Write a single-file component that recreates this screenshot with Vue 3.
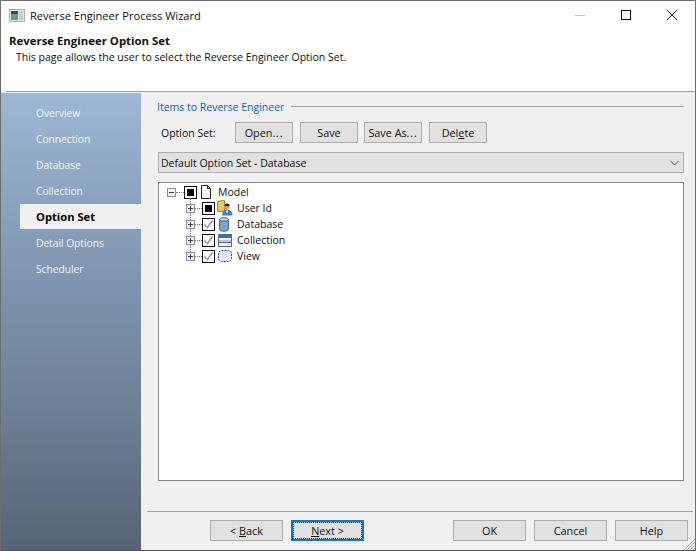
<script setup>
const nav = ['Overview', 'Connection', 'Database', 'Collection', 'Option Set', 'Detail Options', 'Scheduler']
const activeNav = 'Option Set'
const children = [
  { label: 'User Id', state: 'mixed', icon: 'user' },
  { label: 'Database', state: 'checked', icon: 'db' },
  { label: 'Collection', state: 'checked', icon: 'coll' },
  { label: 'View', state: 'checked', icon: 'view' }
]
</script>

<template>
  <div class="window">
    <div class="titlebar">
      <svg class="app-icon" width="16" height="13" viewBox="0 0 16 13">
        <rect x="0.500" y="0.500" width="15" height="12" fill="#e4e4e4" stroke="#b0b0b0" />
        <rect x="2" y="2" width="7" height="9" fill="#5f9a8c" />
        <rect x="2" y="2" width="7" height="3" fill="#33505f" />
        <rect x="10" y="2" width="4" height="9" fill="#c4ccd4" />
      </svg>
      <span class="title-text">Reverse Engineer Process Wizard</span>
      <div class="win-buttons">
        <svg width="46" height="28" viewBox="0 0 46 28"><path d="M18 14.500h10" stroke="#c4c4c4" fill="none" /></svg>
        <svg width="46" height="28" viewBox="0 0 46 28"><rect x="18.500" y="9.500" width="9" height="9" fill="none" stroke="#111" /></svg>
        <svg width="46" height="28" viewBox="0 0 46 28"><path d="M18 9l10 10M28 9l-10 10" stroke="#222" fill="none" /></svg>
      </div>
    </div>
    <div class="header">
      <div class="header-title">Reverse Engineer Option Set</div>
      <div class="header-sub">This page allows the user to select the Reverse Engineer Option Set.</div>
    </div>
    <div class="header-rule"></div>
    <div class="body">
      <aside class="sidebar">
        <div v-for="n in nav" :key="n" class="nav-item" :class="{ active: n === activeNav }">{{ n }}</div>
      </aside>
      <main class="main">
        <div class="content">
          <div class="group-title"><span>Items to Reverse Engineer</span><i></i></div>
          <div class="option-row">
            <span class="option-label">Option Set:</span>
            <button class="btn small">Open<span class="ell">...</span></button>
            <button class="btn small">Save</button>
            <button class="btn small tight">Save As<span class="ell">...</span></button>
            <button class="btn small">Del<u>e</u>te</button>
          </div>
          <div class="select">
            <span>Default Option Set - Database</span>
            <svg width="9" height="6" viewBox="0 0 9 6"><path d="M.5 1l4 4 4-4" fill="none" stroke="#555" /></svg>
          </div>
          <div class="tree">
            <div class="tree-row root">
              <span class="exp"><svg width="9" height="9" viewBox="0 0 9 9"><rect x="0.500" y="0.500" width="8" height="8" fill="#f2f2f2" stroke="#8a8f96" /><path d="M2 4.500h5" stroke="#26407a" /></svg></span>
              <span class="dots"></span>
              <span class="check"><b></b></span>
              <svg class="icon" width="10" height="14" viewBox="0 0 10 14"><path d="M.5.500h6l3 3v10h-9z" fill="#fffdf0" stroke="#222" /><path d="M6.500.500v3h3" fill="none" stroke="#222" /></svg>
              <span class="label">Model</span>
            </div>
            <div class="children">
              <div v-for="c in children" :key="c.label" class="tree-row child">
                <span class="exp"><svg width="9" height="9" viewBox="0 0 9 9"><rect x="0.500" y="0.500" width="8" height="8" fill="#f2f2f2" stroke="#8a8f96" /><path d="M2 4.500h5M4.500 2v5" stroke="#26407a" /></svg></span>
                <span class="dots"></span>
                <span class="check">
                  <b v-if="c.state === 'mixed'"></b>
                  <svg v-else width="11" height="11" viewBox="0 0 11 11"><path d="M1.500 5.500l3 3 5-7" fill="none" stroke="#9a9a9a" stroke-width="1.600" /></svg>
                </span>
                <svg v-if="c.icon === 'user'" class="icon user-icon" width="16" height="16" viewBox="0 0 16 16">
                  <path d="M.5 1.500l5-1h2v11h-7z" fill="#e9c75c" stroke="#a88a2a" />
                  <circle cx="10" cy="6.500" r="2.800" fill="#d79a6a" />
                  <path d="M7.500 6c0-3.200 5-3.200 5 0z" fill="#222" />
                  <path d="M5 15.500c0-4 2.500-6 5-6s5.500 2 5.500 6z" fill="#3a7fc8" />
                  <path d="M9.500 10h1v3h-1z" fill="#fff" />
                </svg>
                <svg v-else-if="c.icon === 'db'" class="icon" width="14" height="15" viewBox="0 0 14 15">
                  <path d="M1.500 2.500v10c0 2.300 9 2.300 9 0v-10z" fill="#7aa3c4" stroke="#3f6c90" />
                  <ellipse cx="6" cy="2.500" rx="4.500" ry="1.800" fill="#b8d2e6" stroke="#3f6c90" />
                </svg>
                <svg v-else-if="c.icon === 'coll'" class="icon" width="14" height="13" viewBox="0 0 14 13">
                  <rect x="0.500" y="0.500" width="13" height="12" fill="#f2f5fb" stroke="#4d6aa8" />
                  <rect x="1" y="1" width="12" height="3" fill="#4d6aa8" />
                  <rect x="1" y="6" width="12" height="2" fill="#b6c7e6" />
                  <path d="M1 8.500h12" stroke="#4d6aa8" />
                </svg>
                <svg v-else class="icon" width="14" height="12" viewBox="0 0 14 12">
                  <rect x="0.500" y="0.500" width="13" height="11" rx="3" fill="#e4e8f4" stroke="#34508f" stroke-dasharray="2 1" />
                </svg>
                <span class="label">{{ c.label }}</span>
              </div>
            </div>
          </div>
        </div>
        <div class="footer">
          <div class="footer-buttons">
            <button class="btn wide">&lt; <u>B</u>ack</button>
            <button class="btn wide default"><span><u>N</u>ext &gt;</span></button>
            <button class="btn wide push">OK</button>
            <button class="btn wide">Cancel</button>
            <button class="btn wide">Help</button>
          </div>
        </div>
        <svg class="grip" width="12" height="11" viewBox="0 0 12 11"><path d="M12 0L1 11M12 3L4 11M12 6L7 11M12 9L10 11" stroke="#b4b4b4" fill="none" /></svg>
      </main>
    </div>
  </div>
</template>

<style>
html, body { margin: 0; padding: 0; background: #f0f0f0; }
</style>

<style scoped>
.window {
  width: 696px;
  height: 551px;
  box-sizing: border-box;
  background: #fff;
  border: 1px solid #6d6d6d;
  border-bottom-color: #4f5660;
  display: flex;
  flex-direction: column;
  font-family: "Open Sans", "Noto Sans", sans-serif;
  font-size: 10.5px;
  color: #111;
  overflow: hidden;
}
.titlebar {
  height: 30px;
  box-sizing: border-box;
  padding: 0 0 2px 8px;
  display: flex;
  align-items: center;
  flex: none;
}
.app-icon { flex: none; margin-right: 5px; }
.title-text { font-size: 11.1px; }
.win-buttons { margin-left: auto; display: flex; }
.win-buttons svg { display: block; }
.header { height: 60px; padding: 2px 8px 0; box-sizing: border-box; flex: none; }
.header-title { font-weight: 700; font-size: 11.4px; line-height: 16px; }
.header-sub { padding-left: 7px; line-height: 16px; }
.header-rule { height: 1px; margin: 0 0 0 5px; background: #a0a0a0; flex: none; }
.body { flex: 1; display: flex; min-height: 0; background: #f0f0f0; padding-top: 1px; }
.sidebar {
  width: 140px;
  flex: none;
  padding: 7px 0 0 19px;
  box-sizing: border-box;
  background: linear-gradient(#9db7d4, #8197b2 38%, #6d7f94 70%, #566475);
}
.nav-item {
  height: 26px;
  line-height: 26px;
  padding-left: 16px;
  color: #f4f6f8;
  font-size: 10.2px;
}
.nav-item.active { height: 25px; margin-bottom: 1px; background: #f0f0f0; color: #000; font-weight: 700; font-size: 11.2px; }
.main { flex: 1; display: flex; flex-direction: column; min-width: 0; position: relative; }
.content { flex: 1; padding: 5px 11px 30px 17px; display: flex; flex-direction: column; min-height: 0; }
.group-title { display: flex; align-items: center; color: #0a66cc; height: 17px; }
.group-title span { margin-left: -1px; }
.group-title i { flex: 1; height: 1px; background: #a0a0a0; margin-left: 7px; }
.option-row { display: flex; align-items: center; margin-top: 7px; height: 21px; gap: 7px; padding-left: 3px; }
.option-label { width: 67px; }
.btn {
  font: inherit;
  font-size: 10.8px;
  color: #111;
  background: #e1e1e1;
  border: 1px solid #adadad;
  box-sizing: border-box;
  padding: 0;
  text-align: center;
}
.btn u { text-decoration: underline; }
.btn.small { width: 58px; height: 21px; }
.btn.tight { margin-left: -1px; }
.ell { letter-spacing: 0.8px; }
.select {
  margin-top: 9px;
  height: 21px;
  background: #e1e1e1;
  border: 1px solid #adadad;
  box-sizing: border-box;
  display: flex;
  align-items: center;
  justify-content: space-between;
  padding: 0 4px 0 2px;
}
.tree {
  margin-top: 9px;
  flex: 1;
  min-height: 0;
  background: #fff;
  border: 1px solid #82878f;
  box-sizing: border-box;
  padding: 1px 0 0 8px;
}
.tree-row { display: flex; align-items: center; height: 16px; }
.exp { width: 9px; height: 9px; flex: none; display: block; position: relative; z-index: 1; }
.exp svg { display: block; }
.dots { width: 7px; border-top: 1px dotted #777; flex: none; }
.root .dots { width: 8px; }
.check {
  width: 13px;
  height: 13px;
  box-sizing: border-box;
  border: 1px solid #111;
  flex: none;
  background: #fff;
  display: flex;
  align-items: center;
  justify-content: center;
}
.check b { width: 7px; height: 7px; background: #000; display: block; }
.check svg { display: block; }
.icon { flex: none; margin-left: 3px; }
.root .icon { margin-left: 4px; }
.icon.user-icon { margin-left: 2px; }
.label { margin-left: 5px; }
.root .label { margin-left: 7px; }
.user-icon + .label { margin-left: 4px; }
.children { padding-left: 19px; }
.child { position: relative; }
.child:not(:last-child)::before {
  content: "";
  position: absolute;
  left: 4px;
  top: 12px;
  height: 12px;
  border-left: 1px dotted #777;
}
.child:first-child::after {
  content: "";
  position: absolute;
  left: 4px;
  top: -2px;
  height: 6px;
  border-left: 1px dotted #777;
}
.footer { flex: none; height: 39px; padding: 0 2px 0 6px; }
.footer-buttons {
  border-top: 1px solid #a0a0a0;
  height: 39px;
  box-sizing: border-box;
  display: flex;
  align-items: flex-start;
  padding: 8px 5px 0 63px;
  gap: 8px;
}
.btn.wide { width: 73px; height: 21px; flex: none; }
.btn.push { margin-left: auto; }
.btn.default {
  border: 2px solid #0078d7;
  padding: 0;
  position: relative;
}
.btn.default span {
  display: block;
  line-height: 15px;
  position: absolute;
  inset: 0;
  border: 1px dotted #111;
}
.grip { position: absolute; right: 0; bottom: 0; }
</style>
